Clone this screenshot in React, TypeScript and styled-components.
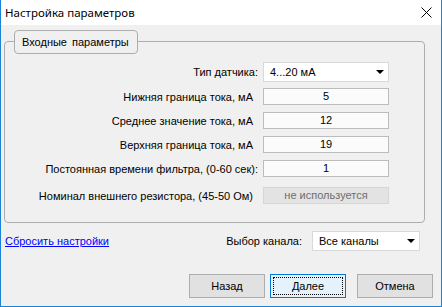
import styled, { createGlobalStyle } from "styled-components";

const GlobalStyle = createGlobalStyle`
  html, body {
    margin: 0;
    padding: 0;
  }
  body {
    font-family: "Liberation Sans", Arial, sans-serif;
    font-size: 11px;
    color: #000;
    background: #f0f0f0;
  }
`;

const Window = styled.div`
  width: 442px;
  height: 307px;
  box-sizing: border-box;
  display: flex;
  flex-direction: column;
  background: #f0f0f0;
  border: 1px solid #1883d7;
  border-top: none;
`;

const TitleBar = styled.div`
  height: 25px;
  flex-shrink: 0;
  background: #fff;
  display: flex;
  align-items: center;
  justify-content: space-between;
  padding: 0 9px 0 4px;
  font-family: "Noto Sans", sans-serif;
  font-size: 11.5px;
`;

const Body = styled.div`
  padding: 16px 8px 0 3px;
  display: flex;
  flex-direction: column;
`;

const GroupBox = styled.div`
  position: relative;
  margin-right: 8px;
  border: 1px solid #adadad;
  border-radius: 4px;
  padding: 20px 0 18px 0;
`;

const Legend = styled.div`
  position: absolute;
  top: -12px;
  left: 9px;
  height: 22px;
  line-height: 22px;
  padding: 0 8px 0 7px;
  background: #f0f0f0;
  border: 1px solid #adadad;
  border-radius: 4px;
  word-spacing: 2px;
`;

const FieldRow = styled.div<{ $gap?: number }>`
  display: grid;
  grid-template-columns: 253px 126px;
  column-gap: 5px;
  align-items: center;
  margin-top: ${(p) => p.$gap ?? 0}px;
`;

const Label = styled.div<{ $pad?: number }>`
  text-align: right;
  padding-right: ${(p) => p.$pad ?? 0}px;
  white-space: nowrap;
`;

const Select = styled.div<{ $width?: number }>`
  box-sizing: border-box;
  height: 20px;
  width: ${(p) => (p.$width ? `${p.$width}px` : "auto")};
  background: #fff;
  border: 1px solid #d9d9d9;
  display: flex;
  align-items: center;
  justify-content: space-between;
  padding: 0 4px 0 6px;
`;

const Arrow = styled.span`
  width: 0;
  height: 0;
  border-left: 4px solid transparent;
  border-right: 4px solid transparent;
  border-top: 4px solid #000;
`;

const ValueBox = styled.div<{ $disabled?: boolean }>`
  box-sizing: border-box;
  height: 17px;
  line-height: 15px;
  text-align: center;
  background: ${(p) => (p.$disabled ? "#e3e3e3" : "#fbfbfb")};
  border: 1px solid ${(p) => (p.$disabled ? "#d6d6d6" : "#bcbcbc")};
  color: ${(p) => (p.$disabled ? "#6d6d6d" : "#000")};
`;

const BottomRow = styled.div`
  margin-top: 8px;
  height: 20px;
  display: flex;
  align-items: center;
  padding: 0 13px 0 1px;
`;

const ResetLink = styled.a`
  color: #0000ff;
  text-decoration: underline;
  cursor: pointer;
`;

const ChannelLabel = styled.span`
  margin-left: auto;
  margin-right: 10px;
`;

const ButtonRow = styled.div`
  margin-top: 23px;
  display: flex;
  justify-content: flex-end;
  gap: 5px;
`;

const Button = styled.button<{ $primary?: boolean; $spaced?: boolean }>`
  position: relative;
  box-sizing: border-box;
  width: 76px;
  height: 24px;
  margin-left: ${(p) => (p.$spaced ? 6 : 0)}px;
  padding: 0;
  font-family: inherit;
  font-size: 11px;
  color: #000;
  background: ${(p) => (p.$primary ? "#e5f1fb" : "#e1e1e1")};
  border: 1px solid ${(p) => (p.$primary ? "#0078d7" : "#adadad")};
  &::after {
    content: "";
    display: ${(p) => (p.$primary ? "block" : "none")};
    position: absolute;
    inset: 2px;
    border: 1px dotted #000;
  }
`;

const CloseIcon = () => (
  <svg width="11" height="11" viewBox="0 0 11 11">
    <path d="M0.5 0.5L10.5 10.5M10.5 0.5L0.5 10.5" stroke="#000" strokeWidth="1" />
  </svg>
);

const fields = [
  { label: "Нижняя граница тока, мА", value: "5", pad: 5, gap: 6 },
  { label: "Среднее значение тока, мА", value: "12", pad: 5, gap: 7 },
  { label: "Верхняя граница тока, мА", value: "19", pad: 5, gap: 7 },
  { label: "Постоянная времени фильтра, (0-60 сек):", value: "1", pad: 0, gap: 7 },
];

const App = () => {
  return (
    <>
      <GlobalStyle />
      <Window>
        <TitleBar>
          <span>Настройка параметров</span>
          <CloseIcon />
        </TitleBar>
        <Body>
          <GroupBox>
            <Legend>Входные параметры</Legend>
            <FieldRow>
              <Label>Тип датчика:</Label>
              <Select>
                <span>4...20 мА</span>
                <Arrow />
              </Select>
            </FieldRow>
            {fields.map((f) => (
              <FieldRow key={f.label} $gap={f.gap}>
                <Label $pad={f.pad}>{f.label}</Label>
                <ValueBox>{f.value}</ValueBox>
              </FieldRow>
            ))}
            <FieldRow $gap={10}>
              <Label $pad={5}>Номинал внешнего резистора, (45-50 Ом)</Label>
              <ValueBox $disabled>не используется</ValueBox>
            </FieldRow>
          </GroupBox>
          <BottomRow>
            <ResetLink>Сбросить настройки</ResetLink>
            <ChannelLabel>Выбор канала:</ChannelLabel>
            <Select $width={108}>
              <span>Все каналы</span>
              <Arrow />
            </Select>
          </BottomRow>
          <ButtonRow>
            <Button>Назад</Button>
            <Button $primary>Далее</Button>
            <Button $spaced>Отмена</Button>
          </ButtonRow>
        </Body>
      </Window>
    </>
  );
};

export default App;
